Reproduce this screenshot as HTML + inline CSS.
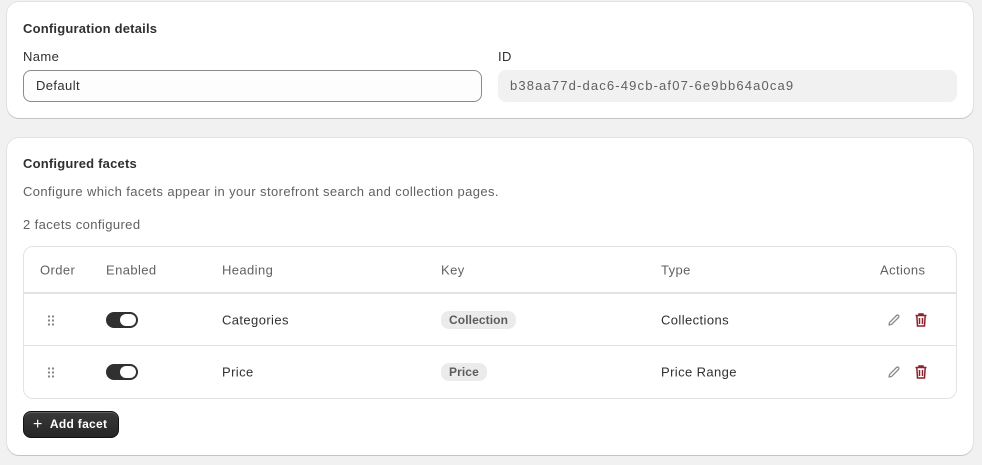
<!DOCTYPE html>
<html><head><style>
*{box-sizing:border-box;margin:0;padding:0}
body{width:982px;height:465px;background:#f1f1f1;font-family:"Liberation Sans",sans-serif;font-size:13px;color:#303030;position:relative;overflow:hidden;letter-spacing:.4px}
.card{position:absolute;left:7px;width:966px;background:#fff;border-radius:12px;box-shadow:0 1px 0 rgba(0,0,0,.13),0 0 0 1px rgba(0,0,0,.06)}
.abs{position:absolute}
h2{font-size:13px;font-weight:bold;color:#303030;letter-spacing:.2px}
.inp{position:absolute;height:32px;border-radius:8px;padding:0 12px;line-height:30px}
.table{position:absolute;left:16px;top:108px;width:934px;height:153px;border:1px solid #e3e3e3;border-radius:10px}
.row{position:absolute;left:0;width:100%;border-top:1px solid #e3e3e3}
.c{position:absolute;top:50%;transform:translateY(-50%);white-space:nowrap}
.hd{color:#616161}
.tog{width:32px;height:16px;background:#303030;border-radius:8px;position:absolute}
.tog::after{content:"";position:absolute;right:2px;top:2px;width:16px;height:12px;background:#fff;border-radius:6px}
.badge{background:#ebebeb;border-radius:8px;padding:2px 8px;font-size:12px;font-weight:bold;color:#5c5c5c;letter-spacing:.1px}
.dots{width:8px;height:11px;background:radial-gradient(circle,#8a8a8a 1.1px,transparent 1.3px) 0 0/4px 4px}
</style></head><body>
<div class="card" style="top:2px;height:116px">
 <h2 class="abs" style="left:16px;top:19px">Configuration details</h2>
 <div class="abs" style="left:16px;top:47px">Name</div>
 <div class="inp" style="left:16px;top:68px;width:459px;border:1px solid #8a8a8a;background:#fdfdfd">Default</div>
 <div class="abs" style="left:491px;top:47px">ID</div>
 <div class="inp" style="left:491px;top:68px;width:459px;background:#f1f1f1;color:#616161;line-height:32px;letter-spacing:1.15px">b38aa77d-dac6-49cb-af07-6e9bb64a0ca9</div>
</div>
<div class="card" style="top:138px;height:317px">
 <h2 class="abs" style="left:16px;top:18px">Configured facets</h2>
 <div class="abs" style="left:16px;top:46px;color:#616161">Configure which facets appear in your storefront search and collection pages.</div>
 <div class="abs" style="left:16px;top:79px;color:#616161">2 facets configured</div>
 <div class="table">
  <div class="row" style="top:0;height:45px;border-top:none">
   <span class="c hd" style="left:16px">Order</span><span class="c hd" style="left:82px">Enabled</span><span class="c hd" style="left:198px">Heading</span><span class="c hd" style="left:417px">Key</span><span class="c hd" style="left:637px">Type</span><span class="c hd" style="left:856px">Actions</span>
  </div>
  <div class="row" style="top:45px;height:53px;border-top:2px solid #e3e3e3">
   <span class="c dots" style="left:23px"></span><span class="c tog" style="left:82px"></span><span class="c" style="left:198px">Categories</span><span class="c badge" style="left:417px">Collection</span><span class="c" style="left:637px">Collections</span>
   <svg class="c" style="left:862px" width="16" height="16" viewBox="0 0 16 16"><path d="M3 13l.6-2.6L10.5 3.5a1.4 1.4 0 012 2L5.6 12.4z" fill="none" stroke="#8a8a8a" stroke-width="1.3" stroke-linejoin="round"/></svg>
   <svg class="c" style="left:890px" width="14" height="16" viewBox="0 0 14 16"><path d="M1.5 3.5h11M5 3.5V2h4v1.5M2.8 3.5l.7 10.5h7l.7-10.5M5.5 6v6M8.5 6v6" fill="none" stroke="#8e1f2b" stroke-width="1.5"/></svg>
  </div>
  <div class="row" style="top:98px;height:53px">
   <span class="c dots" style="left:23px"></span><span class="c tog" style="left:82px"></span><span class="c" style="left:198px">Price</span><span class="c badge" style="left:417px">Price</span><span class="c" style="left:637px">Price Range</span>
   <svg class="c" style="left:862px" width="16" height="16" viewBox="0 0 16 16"><path d="M3 13l.6-2.6L10.5 3.5a1.4 1.4 0 012 2L5.6 12.4z" fill="none" stroke="#8a8a8a" stroke-width="1.3" stroke-linejoin="round"/></svg>
   <svg class="c" style="left:890px" width="14" height="16" viewBox="0 0 14 16"><path d="M1.5 3.5h11M5 3.5V2h4v1.5M2.8 3.5l.7 10.5h7l.7-10.5M5.5 6v6M8.5 6v6" fill="none" stroke="#8e1f2b" stroke-width="1.5"/></svg>
  </div>
 </div>
 <div class="abs" style="left:16px;top:273px;width:96px;height:27px;background:linear-gradient(#3a3a3a,#262626);border-radius:8px;border:1px solid #111;color:#fff;font-weight:bold;font-size:12px;line-height:25px;padding-left:9px;box-shadow:inset 0 1px 0 rgba(255,255,255,.2);letter-spacing:.3px"><span style="font-size:16px;font-weight:normal;vertical-align:-1px">+</span>&nbsp;&nbsp;Add facet</div>
</div>
</body></html>
